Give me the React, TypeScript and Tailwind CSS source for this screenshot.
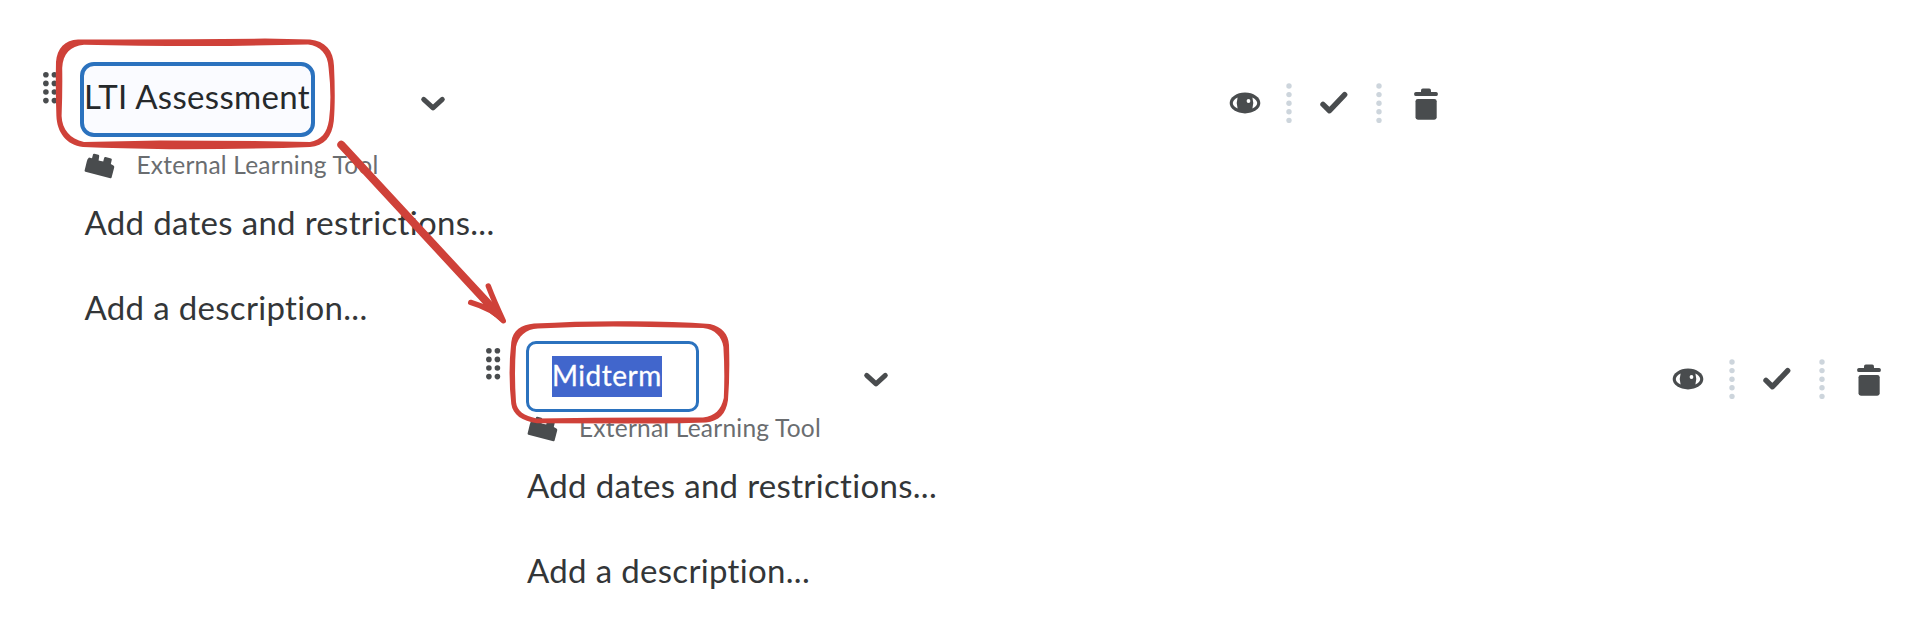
import React from "react";

const DOT_ROWS = [2.8, 11.4, 20, 28.6];
const SEPARATOR_ROWS = [3, 11.6, 20.2, 28.8, 37.4];

function DragHandle() {
  return (
    <svg className="mt-[10px] h-[32px] w-[15px] shrink-0 fill-[#494c4e]" viewBox="0 0 15 32">
      {DOT_ROWS.map((y) => (
        <g key={y}>
          <circle cx="2.9" cy={y} r="2.8" />
          <circle cx="11.4" cy={y} r="2.8" />
        </g>
      ))}
    </svg>
  );
}

function Chevron() {
  return (
    <svg className="h-[18px] w-[26px]" viewBox="0 0 26 18" fill="none" stroke="#494c4e" strokeWidth="5" strokeLinecap="round" strokeLinejoin="round">
      <path d="M3.7 4.4 L13 12.8 L22.3 4.4" />
    </svg>
  );
}

function Eye() {
  return (
    <svg className="h-[22px] w-[32px]" viewBox="0 0 32 22">
      <ellipse cx="16" cy="11" rx="15.3" ry="10.4" fill="#494c4e" />
      <path d="M8.6 5.4 Q3.8 8 3.8 11 Q3.8 14 8.6 16.6 Q6.8 11 8.6 5.4Z M23.4 5.4 Q28.2 8 28.2 11 Q28.2 14 23.4 16.6 Q25.2 11 23.4 5.4Z" fill="#fff" />
      <circle cx="19.5" cy="9" r="1.9" fill="#fff" />
    </svg>
  );
}

function Separator() {
  return (
    <svg className="h-[40px] w-[6px] fill-[#cdd5dc]" viewBox="0 0 6 40">
      {SEPARATOR_ROWS.map((y) => (
        <circle key={y} cx="3" cy={y} r="2.7" />
      ))}
    </svg>
  );
}

function Check() {
  return (
    <svg className="h-[24px] w-[30px]" viewBox="0 0 30 24" fill="none" stroke="#494c4e" strokeWidth="5.4" strokeLinecap="round" strokeLinejoin="round">
      <path d="M4 13.4 L10.5 19.7 L25.7 3.6" />
    </svg>
  );
}

function Trash() {
  return (
    <svg className="mt-[2px] h-[32px] w-[24px] fill-[#494c4e]" viewBox="0 0 24 32">
      <rect x="0.2" y="4" width="23.6" height="4" rx="1.6" />
      <rect x="7" y="0.6" width="10" height="6" rx="1.8" />
      <rect x="1.5" y="10.9" width="21.2" height="20.8" rx="2.4" />
    </svg>
  );
}

function Brick() {
  return (
    <svg className="mt-[1px] h-[28px] w-[32px] fill-[#494c4e]" viewBox="0 0 32 28">
      <path d="M0.6 18.6 L2.8 9.4 Q3.2 7 5 5.6 L8 6.2 L9 2.4 Q9.3 1.4 10.4 1.7 L14.4 2.8 Q15.4 3.1 15.2 4.2 L14.6 8.4 L19.2 9.6 L20.2 5.8 Q20.5 4.9 21.6 5.1 L27 6.4 Q28 6.7 27.8 7.8 L26.8 12 L29.4 13.6 Q30.5 14.3 30.2 15.6 L27.6 25.6 Q27.3 26.6 26.3 26.3 L1.4 19.8 Q0.4 19.5 0.6 18.6Z" />
    </svg>
  );
}

type TopicProps = {
  className: string;
  headerClass: string;
  title: React.ReactNode;
};

function Topic({ className, headerClass, title }: TopicProps) {
  return (
    <section className={`w-[1410px] ${className}`}>
      <header className={`flex items-start ${headerClass}`}>
        <DragHandle />
        <div className="ml-[22px] w-[340px] shrink-0">{title}</div>
        <div className="flex h-[84px] shrink-0 items-center">
          <Chevron />
          <div className="mb-[2px] ml-[783px] flex items-center">
            <Eye />
            <div className="ml-[25px]"><Separator /></div>
            <div className="ml-[27px]"><Check /></div>
            <div className="ml-[27px]"><Separator /></div>
            <div className="ml-[32px]"><Trash /></div>
          </div>
        </div>
      </header>
      <div className="ml-[41px] flex flex-col whitespace-nowrap text-[#333638]">
        <div className="flex h-[56px] items-center text-[24.5px] tracking-[0.22px] text-[#6a6d70]">
          <Brick />
          <span className="ml-[20.5px]">External Learning Tool</span>
        </div>
        <p className="ml-[0.5px] h-[60px] text-[33px] leading-[59px] tracking-[0.32px]">Add dates and restrictions...</p>
        <p className="mt-[24px] ml-[0.5px] h-[60px] text-[33px] leading-[60px] tracking-[0.32px]">Add a description...</p>
      </div>
    </section>
  );
}

function Annotations() {
  return (
    <svg className="pointer-events-none absolute inset-0 h-[642px] w-[1926px]" viewBox="0 0 1926 642">
      <g fill="#cf4139" fillRule="evenodd">
        <path d="M78 39.4 Q170 39.8 265 38.6 L310 39.4 C325 41 333.6 50 334 66 Q335.6 100 333.8 121 C332 137 324 146 310 147 Q250 149.4 170 149.2 Q120 148.6 83 147 C66 145 57 132 56.4 116 Q55.4 90 56 62 C57 48 65 40 78 39.4Z M84 44.8 Q150 46.4 230 46 L308 44.6 C320 46 328 54 328.6 68 Q332 97 329 120 C327 133 321 140 310 142 Q240 140.4 160 140.4 L84 142 C70 139 62 129 61.6 116 Q62.6 90 62.2 68 C63 54 70 46 84 44.8Z" />
        <path d="M534 323.6 Q580 320.8 630 321.2 Q675 321.2 710 324 C722 327 728.4 334 729 345 Q730 375 728 400 C726 414 719 421 706 422.6 Q670 424 630 423.4 L537 423.2 C522 421 513 415 511.3 404 Q507.8 373 511.3 342 C513 330 521 325 534 323.6Z M538 328.4 Q590 326 637 326.8 L703 328 C715 329 722 337 723.4 347 Q725 372 723.8 398 C721 410 715 416 703 417.6 Q620 417 536.7 418.4 C524 416 517 411 516 402 Q514 373 516 347 C518 336 526 329 538 328.4Z" />
      </g>
      <g fill="none" stroke="#cf4139" strokeLinecap="round" strokeLinejoin="round">
        <path d="M341.3 144.8 L497 313" strokeWidth="8" />
        <path d="M488.3 286 Q494 301 503.3 320.8 Q493 309 470.7 302.4" strokeWidth="5.4" />
        <path d="M491 304 L499 315 L503 320.6 L488 309Z" fill="#cf4139" strokeWidth="4" />
      </g>
    </svg>
  );
}

export default function App() {
  return (
    <main className="relative h-[642px] w-[1926px] overflow-hidden bg-white font-['Lato',sans-serif]">
      <Topic
        className="ml-[43px] h-[338px] pt-[62px]"
        headerClass="h-[75px]"
        title={
          <div className="flex h-[75px] w-[235px] items-center rounded-[14px] border-4 border-[#2b72be] bg-[#fafbff] pb-[6px] text-[33px] tracking-[0.32px] whitespace-nowrap text-[#26292b]">
            LTI Assessment
          </div>
        }
      />
      <Topic
        className="ml-[485.5px]"
        headerClass="h-[62px]"
        title={
          <div className="mt-[3px] ml-[3.5px] flex h-[71px] w-[173px] items-center rounded-[10px] border-[3px] border-[#2b72be] bg-white pl-[23px] text-[28px] text-white">
            <span className="h-[41px] w-[110px] bg-[#4166cc] leading-[38px] tracking-[0.5px] whitespace-nowrap [-webkit-text-stroke:0.3px_white]">Midterm</span>
          </div>
        }
      />
      <Annotations />
    </main>
  );
}
